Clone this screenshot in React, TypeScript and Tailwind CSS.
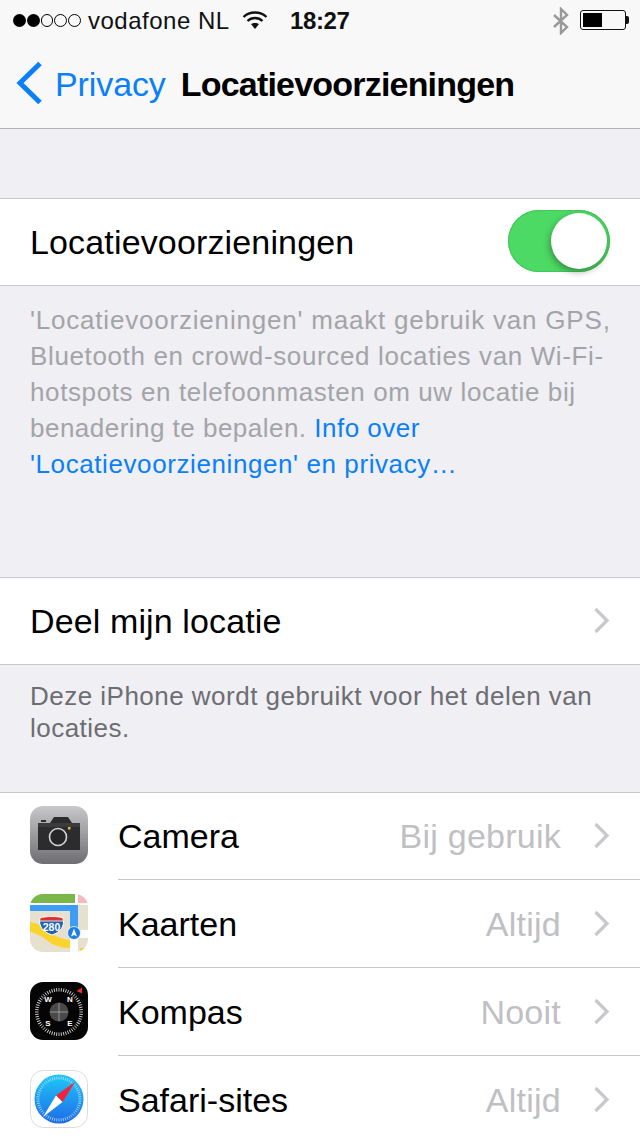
import React from 'react';

const Chevron = () => (
  <svg width="18" height="28" viewBox="0 0 18 28" fill="none" className="shrink-0">
    <path d="M2.500 2 L14 13.500 L2.500 25" stroke="#c7c7cc" strokeWidth="3.2" />
  </svg>
);

const CameraIcon = () => (
  <svg width="58" height="58" viewBox="0 0 58 58">
    <defs>
      <linearGradient id="camBg" x1="0" y1="0" x2="0" y2="1">
        <stop offset="0" stopColor="#c8c8ca" />
        <stop offset="1" stopColor="#6e6e72" />
      </linearGradient>
    </defs>
    <rect width="58" height="58" rx="13" fill="url(#camBg)" />
    <path d="M8 17 H20 L24 11 H38 L42 17 H50 V44 H8 Z" fill="#2c2c2e" />
    <rect x="8" y="17" width="42" height="4" fill="#3b3b3d" />
    <rect x="11" y="14" width="5" height="2" fill="#2c2c2e" />
    <circle cx="28" cy="31" r="8.500" fill="#262628" stroke="#d4d4d4" strokeWidth="1.600" />
    <rect x="38" y="21" width="2.500" height="2.500" fill="#f0b43c" />
  </svg>
);

const MapsIcon = () => (
  <svg width="58" height="58" viewBox="0 0 58 58">
    <defs>
      <clipPath id="mapClip">
        <rect width="58" height="58" rx="13" />
      </clipPath>
    </defs>
    <g clipPath="url(#mapClip)">
      <rect width="58" height="58" fill="#e6e0cf" />
      <rect width="58" height="11" fill="#fbfbfb" />
      <rect width="45" height="9" fill="#7ab648" />
      <rect x="48" width="10" height="9" fill="#f3b8c0" />
      <path d="M0 28 C8 29 14 33 20 38 C26 43 32 45 40 46 V54 C30 54 22 51 15 45 C10 41 5 39 0 38 Z" fill="#fbd32f" />
      <rect x="40" y="37" width="8" height="21" fill="#fbfbfb" />
      <rect x="48" y="36" width="10" height="8" fill="#fbfbfb" />
      <path d="M0 11 H48 V37 H40 V17 H0 Z" fill="#3f9cf5" />
      <path d="M10 24 C16 22 28 22 33 24 C35 32 31 38 22 41 C13 38 8 32 10 24 Z" fill="#1f63b8" stroke="#fff" strokeWidth="1" />
      <path d="M10 24 C16 22 28 22 33 24 L33.300 27 H9.700 Z" fill="#d8332f" stroke="#fff" strokeWidth="0.800" />
      <text x="21.500" y="36.500" textAnchor="middle" fontSize="10.500" fontWeight="700" fill="#fff" fontFamily="'Liberation Sans', sans-serif">280</text>
      <circle cx="44" cy="39" r="6.500" fill="#1c7fe8" stroke="#fff" strokeWidth="0.800" />
      <path d="M44 34.500 L47 42.500 L44 41 L41 42.500 Z" fill="#fff" />
      <rect x="50" y="54" width="8" height="4" fill="#fbd32f" />
    </g>
  </svg>
);

const compassTicks = Array.from({ length: 60 }, (_, i) => i * 6);

const CompassIcon = () => (
  <svg width="58" height="58" viewBox="0 0 58 58">
    <rect width="58" height="58" rx="13" fill="#050505" />
    {compassTicks.map((deg) => (
      <line key={deg} x1="29" y1="6" x2="29" y2="9.500" stroke="#cfcfcf" strokeWidth="0.900" transform={`rotate(${deg} 29 30)`} />
    ))}
    <circle cx="29" cy="30" r="9.500" fill="#4a4a4a" />
    <path d="M29 21 V39 M20 30 H38" stroke="#a8a8a8" strokeWidth="0.800" />
    <path d="M52 5.500 L52 11.500 L46.500 9 Z" fill="#e8322a" />
    <g fontFamily="'Liberation Sans', sans-serif" fontWeight="700" fontSize="8" fill="#fff" textAnchor="middle">
      <text x="18" y="20">W</text>
      <text x="40" y="20">N</text>
      <text x="18" y="44">S</text>
      <text x="40" y="44">E</text>
    </g>
  </svg>
);

const safariTicks = Array.from({ length: 60 }, (_, i) => i * 6);

const SafariIcon = () => (
  <svg width="58" height="58" viewBox="0 0 58 58">
    <defs>
      <linearGradient id="safBg" x1="0" y1="0" x2="0" y2="1">
        <stop offset="0" stopColor="#1fc8f8" />
        <stop offset="1" stopColor="#1e6ae8" />
      </linearGradient>
    </defs>
    <rect x="0.500" y="0.500" width="57" height="57" rx="13" fill="#fff" stroke="#dcdcdc" />
    <circle cx="29" cy="29" r="24.500" fill="url(#safBg)" />
    {safariTicks.map((deg) => (
      <line key={deg} x1="29" y1="6.500" x2="29" y2="9.500" stroke="#bfe6fb" strokeWidth="0.700" transform={`rotate(${deg} 29 29)`} />
    ))}
    <path d="M45 12 L26 25.500 L32.500 32 Z" fill="#f3243a" />
    <path d="M13 47 L32.500 32 L26 25.500 Z" fill="#fff" />
  </svg>
);

const AppRow = ({ icon, name, value, first, last }: { icon: React.ReactNode; name: string; value: string; first?: boolean; last?: boolean }) => (
  <div className={`flex items-start pl-[30px] shrink-0 ${first ? 'h-[87px]' : 'h-[88px]'}`}>
    <div className={`w-[58px] h-[58px] mr-[30px] shrink-0 ${first ? 'mt-[13px]' : 'mt-[14px]'}`}>{icon}</div>
    <div className={`flex-1 h-full flex items-center pr-[29px] ${last ? '' : 'border-b border-[#c8c7cc]'} ${first || last ? '' : 'pt-[1px]'}`}>
      <span className="text-[34px] text-black flex-1">{name}</span>
      <span className="text-[34px] text-[#c0c0c4] mr-[32px] tracking-[0.25px]">{value}</span>
      <Chevron />
    </div>
  </div>
);

export default function App() {
  return (
    <div className="w-[640px] h-[1136px] overflow-hidden bg-[#efeff4] flex flex-col font-['Liberation_Sans',sans-serif]">
      <div className="h-[129px] shrink-0 bg-[#f8f8f8] border-b border-[#b2b2b6]">
        <div className="h-[40px] flex items-center pl-[13px] pr-[11px] text-[#111] relative">
          <div className="flex gap-[1px] w-[68px]">
            <span className="w-[13px] h-[13px] rounded-full bg-black" />
            <span className="w-[13px] h-[13px] rounded-full bg-black" />
            <span className="w-[13px] h-[13px] rounded-full border border-black" />
            <span className="w-[13px] h-[13px] rounded-full border border-black" />
            <span className="w-[13px] h-[13px] rounded-full border border-black" />
          </div>
          <span className="text-[24px] ml-[7px] w-[143px] whitespace-nowrap tracking-[0.5px] mt-[1px]">vodafone NL</span>
          <svg width="26" height="20" viewBox="0 0 26 20" fill="none" className="ml-[11px]">
            <path d="M1.500 7 C7.500 1 18.500 1 24.500 7" stroke="#111" strokeWidth="2.400" />
            <path d="M5.500 11 C9.500 7 16.500 7 20.500 11" stroke="#111" strokeWidth="2.400" />
            <path d="M9 14 C11 12.500 15 12.500 17 14 L13 19 Z" fill="#111" />
          </svg>
          <span className="text-[24px] font-bold ml-[22px] tracking-[-0.4px] mt-[1px]">18:27</span>
          <svg width="18" height="28" viewBox="0 0 18 28" fill="none" className="ml-auto mr-[10px] mt-[2px]">
            <path d="M2 8 L15 20 L9 26 V2 L15 8 L2 20" stroke="#999" strokeWidth="2.400" />
          </svg>
          <div className="flex items-center">
            <div className="w-[46px] h-[20px] rounded-[3px] border border-[#111] p-[2px]">
              <div className="w-[19px] h-full bg-black" />
            </div>
            <div className="w-[3px] h-[8px] bg-[#111] rounded-r-[2px]" />
          </div>
        </div>
        <div className="h-[88px] flex items-center pl-[16px]">
          <svg width="26" height="44" viewBox="0 0 26 44" fill="none" className="shrink-0 mb-[2px]">
            <path d="M24 2.500 L4 22 L24 41.500" stroke="#0a7ffb" strokeWidth="5" />
          </svg>
          <span className="text-[34px] text-[#0a7ffb] ml-[13px] mt-[1px] tracking-[-0.1px]">Privacy</span>
          <span className="text-[34px] font-bold text-black ml-[15px] mt-[1px] tracking-[-0.8px]">Locatievoorzieningen</span>
        </div>
      </div>

      <div className="h-[69px] shrink-0" />
      <div className="h-[88px] shrink-0 bg-white border-y border-[#c8c7cc] flex items-center pl-[30px] pr-[30px]">
        <span className="text-[34px] text-black flex-1 tracking-[0.15px]">Locatievoorzieningen</span>
        <div className="relative w-[102px] h-[62px] rounded-full bg-[#4cd964] shadow-[inset_0_0_0_1px_#44c65a] mb-[2px]">
          <div className="absolute right-[3px] top-[3px] w-[56px] h-[56px] rounded-full bg-white shadow-[-1px_3px_7px_rgba(0,0,0,0.35)]" />
        </div>
      </div>
      <div className="h-[291px] shrink-0 pl-[30px] pr-[30px] pt-[16px] text-[26px] leading-[36px] text-[#a4a4a8]">
        <p className="whitespace-nowrap tracking-[0.8px]">'Locatievoorzieningen' maakt gebruik van GPS,</p>
        <p className="whitespace-nowrap tracking-[0.63px]">Bluetooth en crowd-sourced locaties van Wi-Fi-</p>
        <p className="whitespace-nowrap tracking-[0.61px]">hotspots en telefoonmasten om uw locatie bij</p>
        <p className="whitespace-nowrap tracking-[0.48px]">benadering te bepalen. <span className="text-[#0a7ffb]">Info over</span></p>
        <p className="whitespace-nowrap text-[#0a7ffb] tracking-[0.59px]">'Locatievoorzieningen' en privacy…</p>
      </div>
      <div className="h-[88px] shrink-0 bg-white border-y border-[#c8c7cc] flex items-center pl-[30px] pr-[29px]">
        <span className="text-[34px] text-black flex-1 tracking-[0.12px]">Deel mijn locatie</span>
        <Chevron />
      </div>
      <div className="h-[127px] shrink-0 pl-[30px] pr-[30px] pt-[15px] text-[26px] leading-[32px] text-[#6d6d72]">
        <p className="whitespace-nowrap tracking-[0.48px]">Deze iPhone wordt gebruikt voor het delen van</p>
        <p className="whitespace-nowrap tracking-[0.48px]">locaties.</p>
      </div>
      <div className="bg-white border-t border-[#c8c7cc] flex-1 flex flex-col">
        <AppRow icon={<CameraIcon />} name="Camera" value="Bij gebruik" first />
        <AppRow icon={<MapsIcon />} name="Kaarten" value="Altijd" />
        <AppRow icon={<CompassIcon />} name="Kompas" value="Nooit" />
        <AppRow icon={<SafariIcon />} name="Safari-sites" value="Altijd" last />
      </div>
    </div>
  );
}
